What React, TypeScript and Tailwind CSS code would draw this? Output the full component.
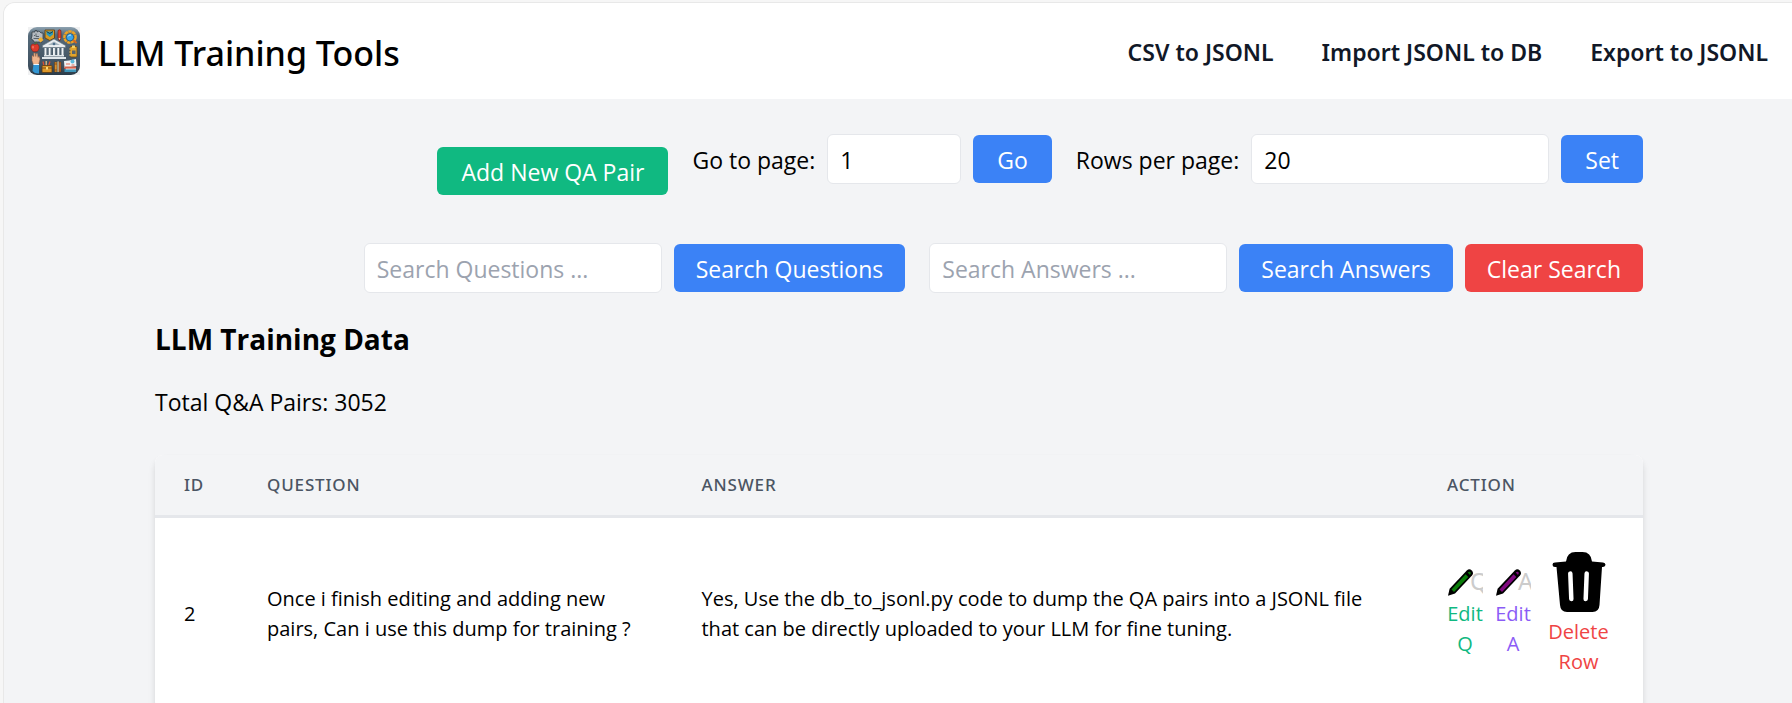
import React from 'react';

const NAV_LINKS = ['CSV to JSONL', 'Import JSONL to DB', 'Export to JSONL'];

const ROWS = [
  {
    id: 2,
    question: 'Once i finish editing and adding new pairs, Can i use this dump for training ?',
    answer:
      'Yes, Use the db_to_jsonl.py code to dump the QA pairs into a JSONL file that can be directly uploaded to your LLM for fine tuning.',
  },
];

function Logo() {
  return (
    <svg viewBox="0 0 52 48" className="h-12 w-[52px]" aria-hidden="true">
      <defs>
        <linearGradient id="tile" x1="0" y1="0" x2="0" y2="1">
          <stop offset="0" stopColor="#8fa3b1" />
          <stop offset="0.16" stopColor="#566b7b" />
          <stop offset="0.8" stopColor="#3f5160" />
          <stop offset="1" stopColor="#2b3c49" />
        </linearGradient>
      </defs>
      <rect width="52" height="48" fill="#f0f1f2" />
      <rect width="52" height="48" rx="9" fill="url(#tile)" />
      {/* gears */}
      <path d="M4 5h3V3.500h2V5l2-1 2 2h2v6l-2 1 1 2H6l-1-2-2-1 1-3z" fill="#b4bac0" stroke="#2c343b" strokeWidth="0.7" />
      <path d="M8 6.500v3h3M5.500 11.500H11M6 8.500h1" stroke="#59636b" fill="none" />
      <path d="M10 12.500l3-2.500 2.500 3-3 2.500z" fill="#f2b233" />
      {/* badge */}
      <path d="M17 3h9.500v8l-4.700 2.500L17 11z" fill="#d99a22" stroke="#5b3c10" strokeWidth="0.8" />
      <path d="M18.500 4.500h6.500v3l-3.200 2.500-3.300-2.500z" fill="#2c99b8" />
      <path d="M18.500 4.500l3.300 2 3.200-2" stroke="#183c4a" fill="none" />
      {/* red pencil */}
      <path d="M30 3.500q1.500-1.500 3 0V11l-1.500 3L30 11z" fill="#d8432f" stroke="#6c1c14" strokeWidth="0.6" />
      <path d="M30.500 11h2l-1 2z" fill="#f0cf9f" />
      {/* magnifier */}
      <circle cx="42" cy="10" r="5.600" fill="none" stroke="#f0a422" strokeWidth="2.400" strokeDasharray="3.400 0.600" />
      <circle cx="42" cy="10" r="4.600" fill="#d88c1c" />
      <circle cx="42" cy="10.300" r="3.700" fill="#3aa5ec" stroke="#14537f" strokeWidth="0.8" />
      <path d="M40 9.500q1-2 3-1.500" stroke="#cdeeff" fill="none" />
      <path d="M45.500 13.500l2.500 2" stroke="#d8681f" strokeWidth="2" strokeLinecap="round" />
      {/* apple */}
      <path d="M7 17.500c-3-1.600-5 1-4 4s3 3.800 4 3c1 .8 3.500 0 4-3s-1-5.600-4-4z" fill="#dd3a2a" stroke="#6e1d17" strokeWidth="0.5" />
      <path d="M7 17.500q0-2 2-2.500" stroke="#4c7a2c" fill="none" />
      <path d="M5 19.500v1.500" stroke="#ff9c85" strokeLinecap="round" />
      {/* building */}
      <path d="M26 12l11.500 6.500v2h-23v-2z" fill="#e8edf0" stroke="#63737e" strokeWidth="0.6" />
      <path d="M26 14.500l6 3.500H20z" fill="#a7b6bf" />
      <circle cx="26" cy="17" r="1.300" fill="#4c6f8a" />
      <path d="M17.500 21v7M21.700 21v7M26 21v7M30.300 21v7M34.500 21v7" stroke="#eef2f4" strokeWidth="2" />
      <path d="M18.800 21v7M23 21v7M27.300 21v7M31.600 21v7" stroke="#7f909b" strokeWidth="0.6" />
      <path d="M16 28h20v1.500H16zM14 30h24v2H14z" fill="#dfe6ea" />
      {/* notebook */}
      <rect x="42" y="19.500" width="7" height="10.500" rx="1" fill="#e3a52c" stroke="#694713" strokeWidth="0.8" />
      <path d="M44 18.500h3v2.500h-3z" fill="#f5cf61" />
      <path d="M44 23.500h3.500v3.500H44z" fill="#556470" />
      <path d="M41 22h2M41 25h2M41 28h2" stroke="#f7d77c" strokeWidth="0.7" />
      {/* raised hand */}
      <path d="M4 28.500v5l1.500 4.500h5l1.500-6-1-3-1 1.500-.5-4-1.300 0-.4 3-.6-3.500-1.400 0v3.500z" fill="#efb58d" stroke="#925f44" strokeWidth="0.5" />
      <path d="M5.500 37.500H11V46.500q-4.500 .3-6.500-2.500z" fill="#3296d3" />
      <path d="M5.500 37.500H11" stroke="#ebf6ff" strokeWidth="1.200" />
      {/* tool box */}
      <path d="M16 39l-1-4.500M20.500 39l1.500-4.500" stroke="#d94d30" strokeWidth="1.300" />
      <path d="M18.200 39v-5" stroke="#e8c887" strokeWidth="1.200" />
      <rect x="14" y="38.500" width="10" height="7" rx="1" fill="#dc972a" stroke="#5d3a10" strokeWidth="0.8" />
      <path d="M14 41h10" stroke="#814f12" />
      <rect x="18" y="40" width="2" height="2.500" fill="#f8d979" />
      {/* books */}
      <path d="M26.500 35H29v10h-2.500z" fill="#d98e2b" stroke="#4d2f10" strokeWidth="0.4" />
      <path d="M29.500 34.500h1.300V45h-1.300z" fill="#f0d6a0" />
      <path d="M31 35h2v10h-2z" fill="#b95c26" stroke="#4d2f10" strokeWidth="0.4" />
      <path d="M26.500 37H29M26.500 43H29" stroke="#6d3d15" strokeWidth="0.7" />
      {/* papers */}
      <path d="M36 34l5-.500 7-1.500 .5 7-12 2z" fill="#eef2f4" />
      <circle cx="44.500" cy="34.500" r="2" fill="#5cbadb" />
      <path d="M38 37h4M43.500 38h3" stroke="#e06e59" />
      <path d="M36.500 39.500H48V42H36.500z" fill="#d4624c" />
      <path d="M36.500 42H48v3H36.500z" fill="#3d94b8" />
      <path d="M38 42h10" stroke="#f2f4f5" strokeWidth="0.8" />
    </svg>
  );
}

function PenIcon({ color, letter }: { color: string; letter: string }) {
  return (
    <svg viewBox="0 0 36 35" className="h-[35px] w-9 overflow-hidden" aria-hidden="true">
      <text x="23" y="26" fontSize="24" fill="#cccccc" className="font-['Noto_Sans',sans-serif]">
        {letter}
      </text>
      <path d="M1 31.800l1.600-7L19.800 6.400q2.600-2.400 5 0t.2 5L8 29.600z" fill="#000" />
      <path d="M4.500 25.400L18.600 10.300l2.700 2.700L7 28z" fill={color} />
      <path d="M20.700 8.600q1.700-1.500 2.700-.5t-.4 2.800z" fill={color} />
    </svg>
  );
}

function TrashIcon() {
  return (
    <svg viewBox="0 0 54 61" className="h-[61px] w-[54px]" aria-hidden="true">
      <path
        d="M14 9.500q1-9.500 9.500-9.500h7q8.500 0 9.500 9.500l11 1q2.500.2 2.500 2.300T51 15h-1l-2.500 38q-.5 7-7 7H15q-6.500 0-7-7L4.500 15H3Q.5 15 .5 12.800T3 10.500z"
        fill="#000"
      />
      <path d="M18.300 21.500l1 25.500M34.700 21.500l-1 25.500" stroke="#fff" strokeWidth="4.500" strokeLinecap="round" />
    </svg>
  );
}

const BUTTON = 'h-12 whitespace-nowrap rounded-md pt-[2px] text-white';
const INPUT = 'h-[50px] rounded-md border border-gray-200 bg-white px-3 pt-[2px] text-black placeholder:text-[#9ca3af]';
const HEAD =
  "px-[29px] py-[15px] text-left font-['Noto_Sans',sans-serif] text-[17px] leading-[30px] font-medium tracking-wider text-[#4b5563] uppercase";

export default function App() {
  return (
    <div className="min-h-screen bg-[#f6f6f6] pt-[2px] pl-[3px] font-['Open_Sans','Noto_Sans',sans-serif]">
      <div className="min-h-screen overflow-hidden rounded-tl-xl border-t border-l border-[#e8e8e8] bg-[#f3f4f6] text-[23px] leading-9 text-black">
        <header className="flex h-24 items-center justify-between bg-white px-6 font-['Noto_Sans',sans-serif]">
          <div className="flex items-center gap-[18px]">
            <Logo />
            <h1 className="pt-1 text-[34px] leading-[50px] font-medium">LLM Training Tools</h1>
          </div>
          <nav className="flex gap-12 pt-[2px] font-semibold text-[#111827]">
            {NAV_LINKS.map((label) => (
              <a key={label} href="#">
                {label}
              </a>
            ))}
          </nav>
        </header>

        <main className="pt-[35px] pr-[149px] pl-[151px]">
          <div className="flex items-start justify-end gap-6">
            <button type="button" className={BUTTON + ' mt-[13px] bg-[#10b981] px-6'}>
              Add New QA Pair
            </button>
            <form className="flex items-center gap-3" onSubmit={(e) => e.preventDefault()}>
              <label htmlFor="page" className="pt-[2px]">Go to page:</label>
              <input id="page" type="text" defaultValue="1" className={INPUT + ' w-[134px]'} />
              <button type="submit" className={BUTTON + ' bg-[#3b82f6] px-6'}>
                Go
              </button>
            </form>
            <form className="flex items-center gap-3" onSubmit={(e) => e.preventDefault()}>
              <label htmlFor="rows" className="pt-[2px]">Rows per page:</label>
              <input id="rows" type="text" defaultValue="20" className={INPUT + ' w-[298px]'} />
              <button type="submit" className={BUTTON + ' bg-[#3b82f6] px-6'}>
                Set
              </button>
            </form>
          </div>

          <div className="mt-12 flex items-center justify-end gap-6">
            <form className="flex items-center gap-3" onSubmit={(e) => e.preventDefault()}>
              <input aria-label="Search Questions" type="text" placeholder="Search Questions ..." className={INPUT + ' w-[298px]'} />
              <button type="submit" className={BUTTON + ' bg-[#3b82f6] px-[22px]'}>
                Search Questions
              </button>
            </form>
            <form className="flex items-center gap-3" onSubmit={(e) => e.preventDefault()}>
              <input aria-label="Search Answers" type="text" placeholder="Search Answers ..." className={INPUT + ' w-[298px]'} />
              <button type="submit" className={BUTTON + ' bg-[#3b82f6] px-[22px]'}>
                Search Answers
              </button>
              <button type="reset" className={BUTTON + ' bg-[#ef4444] px-[22px]'}>
                Clear Search
              </button>
            </form>
          </div>

          <h2 className="mt-6 text-[28px] leading-[44px] font-bold">LLM Training Data</h2>
          <p className="mt-[23px]">Total Q&amp;A Pairs: 3052</p>

          <div className="mt-[35px] overflow-hidden rounded-lg bg-white shadow-[0_6px_9px_-1px_rgba(0,0,0,0.1),0_3px_6px_-2px_rgba(0,0,0,0.1)]">
            <table className="w-full table-fixed">
              <colgroup>
                <col className="w-[83px]" />
                <col className="w-[29.2%]" />
                <col />
                <col className="w-[225px]" />
              </colgroup>
              <thead>
                <tr className="border-b-[3px] border-gray-200 bg-[#f3f4f6]">
                  <th scope="col" className={HEAD}>ID</th>
                  <th scope="col" className={HEAD}>Question</th>
                  <th scope="col" className={HEAD}>Answer</th>
                  <th scope="col" className={HEAD}>Action</th>
                </tr>
              </thead>
              <tbody>
                {ROWS.map((row) => (
                  <tr key={row.id} className="border-b border-gray-200 text-[20px] leading-[30px]">
                    <td className="px-[29px]">{row.id}</td>
                    <td className="px-[29px]">{row.question}</td>
                    <td className="px-[29px]">{row.answer}</td>
                    <td className="px-[29px] pt-[34px] pb-8">
                      <div className="flex items-start gap-3">
                        <button type="button" className="mt-3 flex w-9 flex-col items-center text-[#10b981]">
                          <PenIcon color="#0a7d0a" letter="Q" />
                          <span>Edit Q</span>
                        </button>
                        <button type="button" className="mt-3 flex w-9 flex-col items-center text-[#8b5cf6]">
                          <PenIcon color="#80087f" letter="A" />
                          <span>Edit A</span>
                        </button>
                        <button type="button" className="flex flex-1 flex-col items-center gap-1 text-[#ef4444]">
                          <TrashIcon />
                          <span>Delete Row</span>
                        </button>
                      </div>
                    </td>
                  </tr>
                ))}
              </tbody>
            </table>
          </div>
        </main>
      </div>
    </div>
  );
}
